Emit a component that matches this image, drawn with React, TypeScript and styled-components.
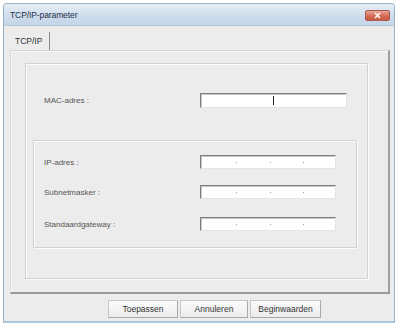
import React from "react";
import styled, { createGlobalStyle } from "styled-components";

const Global = createGlobalStyle`
  * { box-sizing: border-box; }
  html, body { margin: 0; padding: 0; background: #ffffff; }
  body { font-family: "Liberation Sans", Arial, sans-serif; }
`;

const Page = styled.div`
  width: 398px;
  height: 326px;
  padding: 3px 0 0 3px;
`;

const Window = styled.div`
  width: 392px;
  height: 320px;
  border: 1px solid #9fb2c4;
  border-bottom: 2px solid #a9c6dd;
  border-radius: 4px 4px 0 0;
  background: #ececec;
  display: flex;
  flex-direction: column;
  overflow: hidden;
`;

const TitleBar = styled.div`
  height: 22px;
  flex: none;
  display: flex;
  align-items: center;
  justify-content: space-between;
  padding: 0 4px 0 6px;
  background: linear-gradient(#e6eef7, #cddcec 60%, #c4d6e9);
  border-bottom: 1px solid #b8c8d8;
`;

const Title = styled.span`
  font-size: 8.5px;
  color: #1e2c48;
  letter-spacing: -0.1px;
`;

const CloseButton = styled.div`
  width: 25px;
  height: 11px;
  border-radius: 2px;
  background: linear-gradient(#e9a797, #d46a55 55%, #c85a46);
  border: 1px solid #a85a4c;
  display: flex;
  align-items: center;
  justify-content: center;
  margin-top: 2px;
`;

const Body = styled.div`
  flex: 1;
  display: flex;
  flex-direction: column;
  padding: 0 4px 0 6px;
`;

const TabStrip = styled.div`
  height: 24px;
  display: flex;
  align-items: flex-end;
  padding-left: 2px;
`;

const TabLabel = styled.div`
  height: 18px;
  padding: 0 7px 0 3px;
  display: flex;
  align-items: center;
  font-size: 8.5px;
  color: #333;
  background: transparent;
  border: 0;
  border-right: 1px solid #8a8a8a;
`;

const Pane = styled.div`
  width: 380px;
  height: 244px;
  border: 1px solid #d6d6d6;
  border-right: 2px solid #a0a0a0;
  border-bottom: 2px solid #9a9a9a;
  box-shadow: inset 1px 1px 0 #f8f8f8;
  padding: 12px 0 0 14px;
  background: #ececec;
`;

const GroupBox = styled.div<{ $w: number; $h: number }>`
  width: ${(p) => p.$w}px;
  height: ${(p) => p.$h}px;
  border: 1px solid #d2d2d2;
  box-shadow: inset 1px 1px 0 #fbfbfb, 1px 1px 0 #fbfbfb;
  display: flex;
  flex-direction: column;
`;

const MacRow = styled.div`
  display: flex;
  align-items: center;
  margin-top: 29px;
  padding-left: 18px;
  height: 15px;
`;

const InnerWrap = styled.div`
  margin: 32px 0 0 7px;
`;

const FieldRow = styled.div<{ $mt: number }>`
  display: flex;
  align-items: center;
  height: 14px;
  margin-top: ${(p) => p.$mt}px;
  padding-left: 10px;
`;

const Label = styled.span<{ $w: number }>`
  width: ${(p) => p.$w}px;
  font-size: 8px;
  color: #555;
  flex: none;
`;

const Input = styled.div<{ $w: number; $h: number }>`
  position: relative;
  width: ${(p) => p.$w}px;
  height: ${(p) => p.$h}px;
  background: #ffffff;
  border-top: 1px solid #7e7e7e;
  border-left: 1px solid #7e7e7e;
  border-right: 1px solid #e4e4e4;
  border-bottom: 1px solid #e4e4e4;
  box-shadow: inset 1px 1px 0 #c8c8c8;
`;

const Caret = styled.div`
  position: absolute;
  left: 72px;
  top: 2px;
  width: 1px;
  height: 9px;
  background: #222;
`;

const Dot = styled.span`
  position: absolute;
  top: 6px;
  width: 1px;
  height: 1px;
  background: #9a9a9a;
`;

const ButtonRow = styled.div`
  display: flex;
  gap: 2px;
  padding-left: 98px;
  margin-top: 6px;
`;

const Button = styled.button<{ $w: number }>`
  width: ${(p) => p.$w}px;
  height: 18px;
  padding: 0;
  font-family: "Liberation Sans", Arial, sans-serif;
  font-size: 8.5px;
  color: #333;
  background: linear-gradient(#fbfbfb, #ececec);
  border: 1px solid #c6c6c6;
  border-right-color: #a8a8a8;
  border-bottom-color: #a8a8a8;
  border-radius: 1px;
`;

function IpInput() {
  return (
    <Input $w={136} $h={14}>
      <Dot style={{ left: 35 }} />
      <Dot style={{ left: 69 }} />
      <Dot style={{ left: 102 }} />
    </Input>
  );
}

export default function App() {
  return (
    <Page>
      <Global />
      <Window>
        <TitleBar>
          <Title>TCP/IP-parameter</Title>
          <CloseButton>
            <svg width="7" height="7" viewBox="0 0 7 7">
              <path d="M1 1 L6 6 M6 1 L1 6" stroke="#fff" strokeWidth="1.4" />
            </svg>
          </CloseButton>
        </TitleBar>
        <Body>
          <TabStrip>
            <TabLabel>TCP/IP</TabLabel>
          </TabStrip>
          <Pane>
            <GroupBox $w={343} $h={216}>
              <MacRow>
                <Label $w={156}>MAC-adres :</Label>
                <Input $w={147} $h={15}>
                  <Caret />
                </Input>
              </MacRow>
              <InnerWrap>
                <GroupBox $w={324} $h={108}>
                  <FieldRow $mt={14}>
                    <Label $w={156}>IP-adres :</Label>
                    <IpInput />
                  </FieldRow>
                  <FieldRow $mt={16}>
                    <Label $w={156}>Subnetmasker :</Label>
                    <IpInput />
                  </FieldRow>
                  <FieldRow $mt={18}>
                    <Label $w={156}>Standaardgateway :</Label>
                    <IpInput />
                  </FieldRow>
                </GroupBox>
              </InnerWrap>
            </GroupBox>
          </Pane>
          <ButtonRow>
            <Button $w={70}>Toepassen</Button>
            <Button $w={68}>Annuleren</Button>
            <Button $w={71}>Beginwaarden</Button>
          </ButtonRow>
        </Body>
      </Window>
    </Page>
  );
}
